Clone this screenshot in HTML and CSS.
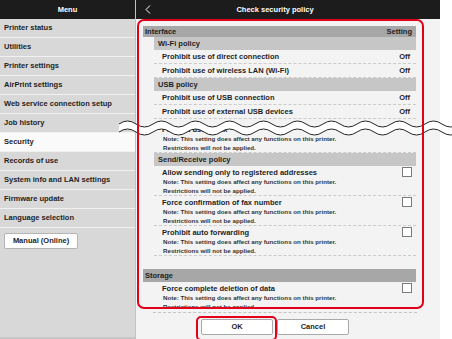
FILE: index.html
```html
<!DOCTYPE html>
<html lang="en">
<head>
    <meta charset="UTF-8">
    <meta name="viewport" content="width=device-width, initial-scale=1.0">
    <title>Check security policy</title>
    <link rel="stylesheet" href="styles.css">
</head>
<body>
    <div class="app">
        <div class="sidebar">
            <div class="bar">Menu</div>
            <div class="menu-item">Printer status</div>
            <div class="menu-item">Utilities</div>
            <div class="menu-item">Printer settings</div>
            <div class="menu-item">AirPrint settings</div>
            <div class="menu-item">Web service connection setup</div>
            <div class="menu-item">Job history</div>
            <div class="menu-item active">Security</div>
            <div class="menu-item">Records of use</div>
            <div class="menu-item">System info and LAN settings</div>
            <div class="menu-item">Firmware update</div>
            <div class="menu-item">Language selection</div>
            <div class="manual">Manual (Online)</div>
        </div>

        <div class="main">
            <div class="bar main-bar">
                <svg class="back" width="6" height="9" viewBox="0 0 6 9">
                    <polyline points="5,0.5 1,4.5 5,8.5" fill="none" stroke="#fff" stroke-width="1"/>
                </svg>
                <span class="title">Check security policy</span>
            </div>

            <div class="content">
                <div class="th"><span>Interface</span><span>Setting</span></div>
                <div class="gh">Wi-Fi policy</div>
                <div class="row"><span>Prohibit use of direct connection</span><span>Off</span></div>
                <div class="row"><span>Prohibit use of wireless LAN (Wi-Fi)</span><span>Off</span></div>
                <div class="gh">USB policy</div>
                <div class="row"><span>Prohibit use of USB connection</span><span>Off</span></div>
                <div class="row"><span>Prohibit use of external USB devices</span><span>Off</span></div>

                <!-- part of the list is skipped here (see the break line) -->
                <div class="item after-cut">
                    <div class="item-title"><span>Prohibit use of fax</span></div>
                    <div class="note">Note: This setting does affect any functions on this printer.</div>
                    <div class="note">Restrictions will not be applied.</div>
                </div>

                <div class="gh">Send/Receive policy</div>
                <div class="item">
                    <div class="item-title"><span>Allow sending only to registered addresses</span><span class="check"></span></div>
                    <div class="note">Note: This setting does affect any functions on this printer.</div>
                    <div class="note">Restrictions will not be applied.</div>
                </div>
                <div class="item">
                    <div class="item-title"><span>Force confirmation of fax number</span><span class="check"></span></div>
                    <div class="note">Note: This setting does affect any functions on this printer.</div>
                    <div class="note">Restrictions will not be applied.</div>
                </div>
                <div class="item">
                    <div class="item-title"><span>Prohibit auto forwarding</span><span class="check"></span></div>
                    <div class="note">Note: This setting does affect any functions on this printer.</div>
                    <div class="note">Restrictions will not be applied.</div>
                </div>

                <div class="th storage"><span>Storage</span></div>
                <div class="item">
                    <div class="item-title"><span>Force complete deletion of data</span><span class="check"></span></div>
                    <div class="note">Note: This setting does affect any functions on this printer.</div>
                    <div class="note">Restrictions will not be applied.</div>
                </div>
            </div>

            <div class="footer">
                <div class="foot-line"></div>
                <div class="buttons">
                    <div class="btn">OK</div>
                    <div class="btn">Cancel</div>
                </div>
            </div>
        </div>
    </div>

    <!-- break line over the skipped part -->
    <svg class="cut" width="334" height="24" viewBox="0 0 334 24">
        <path d="M0 7 q8.5 -6 17 0 t17 0 t17 0 t17 0 t17 0 t17 0 t17 0 t17 0 t17 0 t17 0 t17 0 t17 0 t17 0 t17 0 t17 0 t17 0 t17 0 t17 0 t17 0 t17 0 L340 15 q-8.5 6 -17 0 t-17 0 t-17 0 t-17 0 t-17 0 t-17 0 t-17 0 t-17 0 t-17 0 t-17 0 t-17 0 t-17 0 t-17 0 t-17 0 t-17 0 t-17 0 t-17 0 t-17 0 t-17 0 t-17 0 Z" fill="#fff"/>
        <path d="M0 7 q8.5 -6 17 0 t17 0 t17 0 t17 0 t17 0 t17 0 t17 0 t17 0 t17 0 t17 0 t17 0 t17 0 t17 0 t17 0 t17 0 t17 0 t17 0 t17 0 t17 0 t17 0" fill="none" stroke="#222" stroke-width="1"/>
        <path d="M0 15 q8.5 -6 17 0 t17 0 t17 0 t17 0 t17 0 t17 0 t17 0 t17 0 t17 0 t17 0 t17 0 t17 0 t17 0 t17 0 t17 0 t17 0 t17 0 t17 0 t17 0 t17 0" fill="none" stroke="#222" stroke-width="1"/>
    </svg>

    <!-- red highlight marks -->
    <div class="mark mark-list"></div>
    <div class="mark mark-ok"></div>
</body>
</html>
```

FILE: styles.css
```css
* {
    box-sizing: border-box;
}

body {
    margin: 0;
    background: #fff;
    font-family: 'Liberation Sans', Arial, sans-serif;
    font-weight: bold;
    color: #1e1e1e;
    overflow: hidden;
}

.app {
    display: flex;
    width: 440px;
    height: 339px;
}

.bar {
    height: 19px;
    background: #1c1c1c;
    color: #fff;
    font-size: 7.5px;
    display: flex;
    align-items: center;
    justify-content: center;
}

/* left menu */
.sidebar {
    width: 136px;
    background: #d8d8d8;
    border-right: 1px solid #c2c2c2;
    border-bottom: 2px solid #c6c6c6;
    display: flex;
    flex-direction: column;
}

.menu-item {
    height: 19px;
    line-height: 18px;
    padding-left: 4px;
    font-size: 7.5px;
    border-bottom: 1px solid #f1f1f1;
}

.menu-item.active {
    background: #fafafa;
}

.manual {
    margin: 5px 0 0 4px;
    width: 74px;
    height: 16px;
    line-height: 14px;
    background: #fff;
    border: 1px solid #b4b4b4;
    border-radius: 2px;
    text-align: center;
    font-size: 7.5px;
}

/* right panel */
.main {
    flex: 1;
    background: #f3f3f3;
    display: flex;
    flex-direction: column;
}

.main-bar {
    justify-content: flex-start;
    padding-right: 26px;
    position: relative;
}

.back {
    position: absolute;
    left: 9px;
    top: 5px;
}

.title {
    flex: 1;
    text-align: center;
}

.content {
    height: 290px;
    overflow: hidden;
    padding: 7px 24px 0 7px;
    font-size: 7.5px;
}

.th {
    height: 11px;
    background: #a7a7a7;
    padding: 0 4px 0 2px;
    display: flex;
    justify-content: space-between;
    align-items: center;
}

.th.storage {
    height: 13px;
    margin-top: 13px;
}

.gh {
    height: 13px;
    margin-left: 11px;
    background: #c6c6c6;
    padding-left: 4px;
    display: flex;
    align-items: center;
}

.row {
    height: 14px;
    margin-left: 11px;
    padding: 0 6px 0 8px;
    border-bottom: 1px dashed #cbcbcb;
    display: flex;
    justify-content: space-between;
    align-items: center;
}

.after-cut {
    margin-top: 4px;
}

.item {
    height: 30px;
    margin-left: 11px;
    padding: 1px 4px 0 8px;
    border-bottom: 1px dashed #cbcbcb;
}

.item-title {
    height: 10px;
    display: flex;
    justify-content: space-between;
    align-items: center;
}

.check {
    width: 10px;
    height: 10px;
    background: #fff;
    border: 1px solid #7a7a7a;
}

.note {
    height: 9px;
    line-height: 9px;
    padding-left: 1px;
    font-size: 6.2px;
    color: #333;
}

.footer {
    height: 30px;
    padding-top: 3px;
}

.foot-line {
    margin: 0 23px 0 17px;
    border-top: 1px dashed #c4c4c4;
}

.buttons {
    display: flex;
    justify-content: center;
    gap: 4px;
    padding-right: 26px;
    margin-top: 6px;
}

.btn {
    width: 72px;
    height: 16px;
    line-height: 14px;
    background: #fff;
    border: 1px solid #a9a9a9;
    border-radius: 2px;
    text-align: center;
    font-size: 7.5px;
}

/* overlays */
.cut {
    position: absolute;
    left: 119px;
    top: 117px;
}

.mark {
    position: absolute;
    border: 2px solid #e2001a;
    border-radius: 7px;
}

.mark-list {
    left: 137px;
    top: 19px;
    width: 287px;
    height: 290px;
}

.mark-ok {
    left: 196px;
    top: 316px;
    width: 81px;
    height: 25px;
    border-radius: 5px;
}
```
